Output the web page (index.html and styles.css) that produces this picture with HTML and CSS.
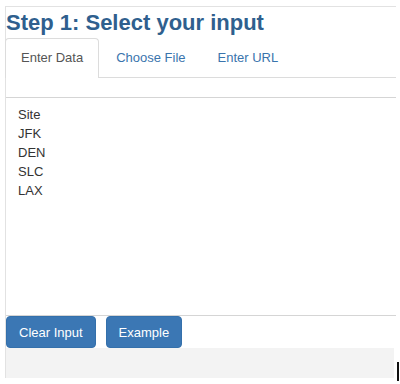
FILE: index.html
```html
<!DOCTYPE html>
<html>
<head>
<meta charset="utf-8">
<link rel="stylesheet" href="styles.css">
</head>
<body>
<div class="panel">
  <h1 class="title">Step 1: Select your input</h1>
  <ul class="tabs">
    <li class="tab active">Enter Data</li>
    <li class="tab">Choose File</li>
    <li class="tab">Enter URL</li>
  </ul>
  <div class="tab-content">
    <div class="data-box">
      <div class="line">Site</div>
      <div class="line">JFK</div>
      <div class="line">DEN</div>
      <div class="line">SLC</div>
      <div class="line">LAX</div>
    </div>
    <div class="actions">
      <button class="btn">Clear Input</button>
      <button class="btn">Example</button>
    </div>
    <div class="footer-strip"></div>
  </div>
</div>
<div class="cursor-mark"></div>
</body>
</html>
```
FILE: styles.css
```css
html, body {
  margin: 0;
  padding: 0;
  background: #fff;
}
body {
  font-family: "Liberation Sans", Arial, Helvetica, sans-serif;
  position: relative;
  width: 400px;
  height: 384px;
  overflow: hidden;
}
.panel {
  margin: 6px 0 0 5px;
  width: 390px;
  border-top: 1px solid #e2e2e2;
  border-left: 1px solid #e2e2e2;
}
.title {
  margin: 2px 0 0 0;
  font-size: 22px;
  line-height: 28px;
  font-weight: bold;
  color: #2f5f8e;
}
.tabs {
  list-style: none;
  margin: 1px 0 0 0;
  padding: 0;
  display: flex;
  border-bottom: 1px solid #dcdcdc;
  height: 39px;
}
.tab {
  font-size: 13px;
  line-height: 38px;
  padding: 0 15px;
  color: #3a74ad;
  border: 1px solid transparent;
  border-bottom: none;
  border-radius: 4px 4px 0 0;
}
.tab.active {
  color: #555;
  background: #fff;
  border-color: #dcdcdc;
  height: 39px;
  margin-left: -1px;
  margin-right: 1px;
}
.tab-content {
  padding-top: 19px;
}
.data-box {
  border-top: 1px solid #d5d5d5;
  border-bottom: 1px solid #d5d5d5;
  height: 210px;
  padding: 7px 12px 0;
  font-size: 13px;
  line-height: 19px;
  color: #333;
}
.actions {
  display: flex;
  gap: 10px;
}
.btn {
  font-family: "Liberation Sans", Arial, Helvetica, sans-serif;
  font-size: 13px;
  color: #fff;
  background: #3b77b4;
  border: 1px solid #3470ab;
  border-radius: 4px;
  height: 32px;
  padding: 0 12px;
  margin: 0;
  cursor: pointer;
}
.footer-strip {
  height: 30px;
  background: #f3f3f3;
  margin-right: 2px;
}
.cursor-mark {
  position: absolute;
  left: 397px;
  top: 362px;
  width: 2px;
  height: 19px;
  background: #111;
}
```
